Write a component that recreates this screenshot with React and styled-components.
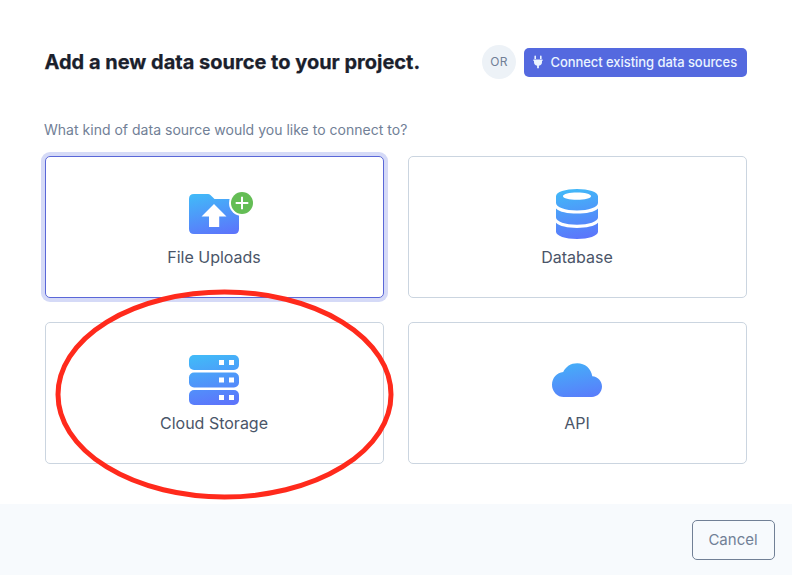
import React from "react";
import styled, { createGlobalStyle } from "styled-components";

const GlobalStyle = createGlobalStyle`
  *, *::before, *::after { box-sizing: border-box; }
  body { margin: 0; background: #fff; font-family: Inter, sans-serif; overflow: hidden; }
  button { font-family: inherit; cursor: pointer; }
`;

const Page = styled.div`
  position: relative;
  display: flex;
  flex-direction: column;
  height: 575px;
  background: #fff;
`;

const Body = styled.main`
  flex: 1;
  padding: 45px 45px 0;
`;

const Header = styled.header`
  display: flex;
  align-items: center;
  height: 34px;
`;

const Title = styled.h1`
  flex: 1;
  margin: 0 0 0 -0.5px;
  font-size: 20px;
  line-height: 30px;
  font-weight: 700;
  -webkit-text-stroke: 0.25px #1a202c;
  white-space: nowrap;
  color: #1a202c;
`;

const OrBadge = styled.span`
  display: flex;
  align-items: center;
  justify-content: center;
  width: 34px;
  height: 34px;
  margin-right: 8px;
  padding-bottom: 1px;
  border-radius: 50%;
  background: #edf2f7;
  color: #718096;
  font-size: 12px;
  letter-spacing: 0.2px;
`;

const ConnectButton = styled.button`
  display: flex;
  align-items: center;
  gap: 7.5px;
  width: 223px;
  height: 29px;
  margin-top: 1px;
  padding: 0 0 1px 9px;
  border: 0;
  border-radius: 5px;
  background: #5469df;
  color: #ebf4ff;
  font-size: 13px;
  font-weight: 500;
  letter-spacing: -0.06px;
  white-space: nowrap;
`;

const Question = styled.p`
  margin: 40px 0 15px -1px;
  font-size: 14px;
  line-height: 22px;
  letter-spacing: 0.015px;
  color: #718096;
`;

const Grid = styled.div`
  display: grid;
  grid-template-columns: 339px 339px;
  grid-auto-rows: 142px;
  gap: 24px;
`;

const Card = styled.button`
  display: flex;
  flex-direction: column;
  align-items: center;
  padding: 31px 1px 0 0;
  border: 1px solid ${(p) => (p.$selected ? "#5a67d8" : "#cbd5e0")};
  border-radius: 5px;
  background: #fff;
  box-shadow: ${(p) => (p.$selected ? "0 0 0 4px #d5daf7" : "none")};
  outline: none;
`;

const CardIcon = styled.svg`
  display: block;
  width: 50px;
  height: 52px;
  overflow: visible;
`;

const CardLabel = styled.span`
  margin-top: 5px;
  font-size: 16px;
  line-height: 24px;
  color: #4a5568;
`;

const Footer = styled.footer`
  display: flex;
  justify-content: flex-end;
  height: 71px;
  padding: 16px 17px 0 0;
  background: #f7fafd;
`;

const CancelButton = styled.button`
  width: 83px;
  height: 40px;
  padding: 0 1px 2px 0;
  border: 1px solid #718096;
  border-radius: 5px;
  background: transparent;
  color: #718096;
  font-size: 15px;
`;

const Annotation = styled.svg`
  position: absolute;
  left: 52px;
  top: 286px;
  width: 345px;
  height: 217px;
  pointer-events: none;
`;

function Gradient({ id, top = 1, bottom = 51 }) {
  return (
    <defs>
      <linearGradient id={id} gradientUnits="userSpaceOnUse" x1="20" y1={top} x2="30" y2={bottom}>
        <stop offset="0" stopColor="#42b8f8" />
        <stop offset="1" stopColor="#5c75fb" />
      </linearGradient>
    </defs>
  );
}

function FolderIcon() {
  return (
    <CardIcon viewBox="0 0 50 52">
      <Gradient id="folder" top={4} bottom={48} />
      <path fill="url(#folder)" d="M5 6H19Q20.4 6 21.4 7L25.5 11H45Q50 11 50 16V41Q50 46 45 46H5Q0 46 0 41V11Q0 6 5 6Z" />
      <path fill="#fff" d="M25 16L37.5 28.5H30.2V39H20V28.5H12.5Z" />
      <circle cx="53" cy="15" r="13" fill="#fff" />
      <circle cx="53" cy="15" r="11" fill="#64bd55" />
      <path d="M46.7 15H59.3M53 8.7V21.3" stroke="#fff" strokeWidth="2" />
    </CardIcon>
  );
}

function DatabaseIcon() {
  return (
    <CardIcon viewBox="0 0 50 52">
      <Gradient id="database" />
      <g fill="url(#database)">
        <path fillRule="evenodd" d="M4 8.2C4 4.1 13.4 1 25 1S46 4.1 46 8.2V15C46 19.2 36.6 22.5 25 22.5S4 19.2 4 15ZM11 8.2C11 10.2 17.3 11.8 25 11.8S39 10.2 39 8.2S32.7 4.6 25 4.6S11 6.2 11 8.2Z" />
        <path d="M4 20.4C7.4 23.8 15.5 25.6 25 25.6S42.6 23.8 46 20.4V29.6C46 33.7 36.6 36.8 25 36.8S4 33.7 4 29.6Z" />
        <path d="M4 34.7C7.4 38.1 15.5 39.9 25 39.9S42.6 38.1 46 34.7V43.8C46 47.9 36.6 51 25 51S4 47.9 4 43.8Z" />
      </g>
    </CardIcon>
  );
}

function StorageIcon() {
  return (
    <CardIcon viewBox="0 0 50 52">
      <Gradient id="storage" />
      <g fill="url(#storage)">
        <rect y="1" width="50" height="15" rx="5" />
        <rect y="18.5" width="50" height="15" rx="5" />
        <rect y="36" width="50" height="15" rx="5" />
      </g>
      <g fill="#fff">
        {[6, 23.5, 41].map((y) => (
          <React.Fragment key={y}>
            <rect x="30" y={y} width="5" height="5" />
            <rect x="40" y={y} width="5" height="5" />
          </React.Fragment>
        ))}
      </g>
    </CardIcon>
  );
}

function CloudIcon() {
  return (
    <CardIcon viewBox="0 0 50 52">
      <Gradient id="cloud" top={1} bottom={51} />
      <path fill="url(#cloud)" d="M11.8 43A11.8 12 0 0 1 0 30.8C0 23.8 5 18.4 11.2 18C13.7 12.6 18.8 9.2 25.2 9.2C33.2 9.2 39 14.4 40.3 22.2C45.8 22.5 50 27 50 32.6C50 38.4 45.4 43 39.8 43Z" />
    </CardIcon>
  );
}

function PlugIcon() {
  return (
    <svg width="10" height="14" viewBox="0 0 10 14" fill="currentColor">
      <path d="M1.4 1.4Q1.4.6 2.2.6T3 1.4V4H1.4ZM7 1.4Q7 .6 7.8.6T8.6 1.4V4H7ZM.4 4.6H9.6V6H9V7.2Q9 9.8 5.9 10.7V13.2H4.1V10.7Q1 9.8 1 7.2V6H.4Z" />
    </svg>
  );
}

const sources = [
  { label: "File Uploads", Icon: FolderIcon, selected: true },
  { label: "Database", Icon: DatabaseIcon },
  { label: "Cloud Storage", Icon: StorageIcon },
  { label: "API", Icon: CloudIcon },
];

export default function App() {
  return (
    <Page>
      <GlobalStyle />
      <Body>
        <Header>
          <Title>Add a new data source to your project.</Title>
          <OrBadge>OR</OrBadge>
          <ConnectButton>
            <PlugIcon />
            Connect existing data sources
          </ConnectButton>
        </Header>
        <Question>What kind of data source would you like to connect to?</Question>
        <Grid>
          {sources.map(({ label, Icon, selected }) => (
            <Card key={label} $selected={selected}>
              <Icon />
              <CardLabel>{label}</CardLabel>
            </Card>
          ))}
        </Grid>
      </Body>
      <Footer>
        <CancelButton>Cancel</CancelButton>
      </Footer>
      <Annotation viewBox="0 0 345 217">
        <ellipse cx="172.5" cy="108.5" rx="166.5" ry="102.5" fill="none" stroke="#ff2a1c" strokeWidth="5" />
      </Annotation>
    </Page>
  );
}
